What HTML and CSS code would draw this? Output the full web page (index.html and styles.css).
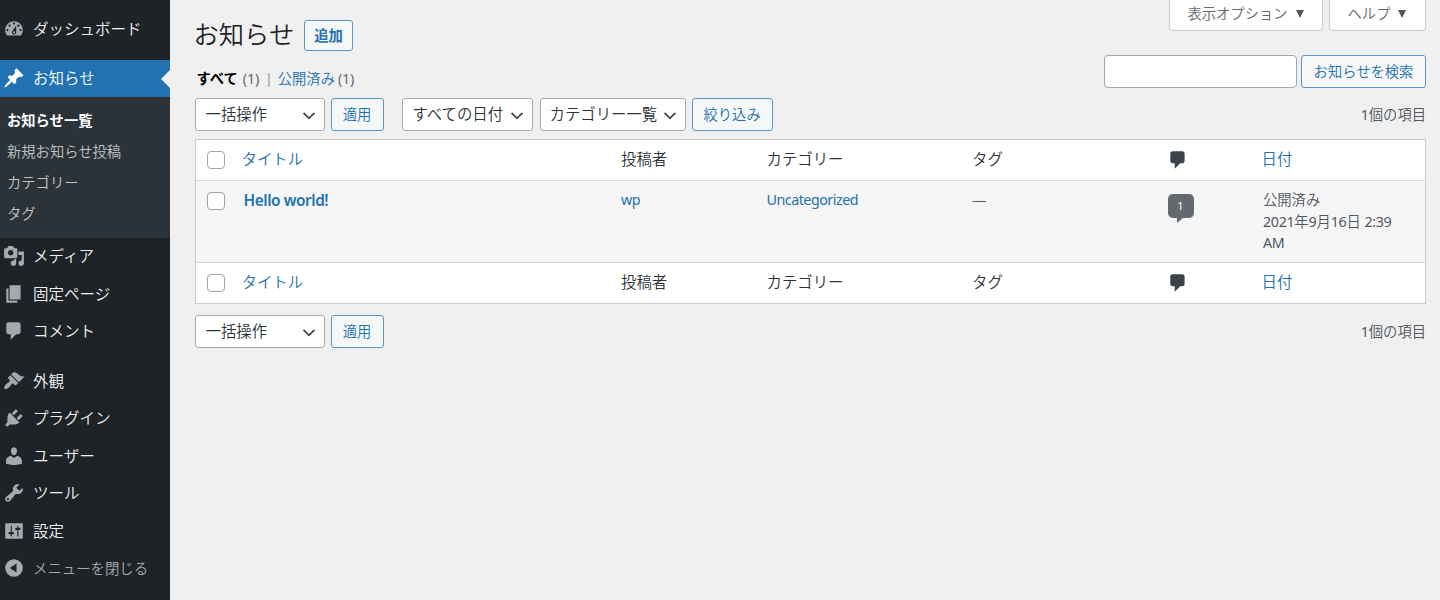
FILE: index.html
```html
<!DOCTYPE html>
<html lang="ja">
<head>
    <meta charset="UTF-8">
    <title>お知らせ</title>
    <link rel="stylesheet" href="styles.css">
</head>
<body>

    <!-- Menu latéral -->
    <nav class="sidebar">
        <ul class="menu">
            <li><a href="#"><svg class="icon" viewBox="0 0 20 20"><path fill-rule="evenodd" d="M3.76 16h12.48c1.1-1.37 1.76-3.11 1.76-5 0-4.42-3.58-8-8-8s-8 3.58-8 8c0 1.89.66 3.63 1.76 5zM10 4c.55 0 1 .45 1 1s-.45 1-1 1-1-.45-1-1 .45-1 1-1zM6 6c.55 0 1 .45 1 1s-.45 1-1 1-1-.45-1-1 .45-1 1-1zm8 0c.55 0 1 .45 1 1s-.45 1-1 1-1-.45-1-1 .45-1 1-1zm-5.37 5.55L12 7v6c0 1.1-.9 2-2 2s-2-.9-2-2c0-.57.24-1.08.63-1.45zM4 10c.55 0 1 .45 1 1s-.45 1-1 1-1-.45-1-1 .45-1 1-1zm12 0c.55 0 1 .45 1 1s-.45 1-1 1-1-.45-1-1 .45-1 1-1zm-5 3c0-.55-.45-1-1-1s-1 .45-1 1 .45 1 1 1 1-.45 1-1z"/></svg><span>ダッシュボード</span></a></li>
            <li class="separator"></li>
            <li class="current">
                <a href="#"><svg class="icon" viewBox="0 0 20 20"><path d="M10.44 3.02l1.82-1.82 6.36 6.35-1.83 1.82c-1.05-.68-2.48-.57-3.41.36l-.75.75c-.92.93-1.04 2.35-.35 3.41l-1.83 1.82-2.41-2.41-2.8 2.79c-.42.42-3.38 2.71-3.8 2.29s1.86-3.39 2.28-3.81l2.79-2.79L4.1 9.36l1.83-1.82c1.05.69 2.48.57 3.4-.36l.75-.75c.93-.92 1.05-2.35.36-3.41z"/></svg><span>お知らせ</span></a>
                <ul class="submenu">
                    <li class="active">お知らせ一覧</li>
                    <li>新規お知らせ投稿</li>
                    <li>カテゴリー</li>
                    <li>タグ</li>
                </ul>
            </li>
            <li><a href="#"><svg class="icon" viewBox="0 0 20 20"><path fill-rule="evenodd" d="M13 11V4c0-.55-.45-1-1-1h-1.67L9 1H5L3.67 3H2c-.55 0-1 .45-1 1v7c0 .55.45 1 1 1h10c.55 0 1-.45 1-1zM7 4.5c1.38 0 2.5 1.12 2.5 2.5S8.38 9.5 7 9.5 4.5 8.38 4.5 7 5.62 4.5 7 4.5zM14 6h5v10.5c0 1.38-1.12 2.5-2.5 2.5S14 17.88 14 16.5s1.12-2.5 2.5-2.5c.17 0 .34.02.5.05V9h-3V6zm-4 8.05V13h2v3.5c0 1.38-1.12 2.5-2.5 2.5S7 17.88 7 16.5 8.12 14 9.5 14c.17 0 .34.02.5.05z"/></svg><span>メディア</span></a></li>
            <li><a href="#"><svg class="icon" viewBox="0 0 20 20"><path d="M6 15V2h10v13H6zm-1 1h8v2H3V5h2v11z"/></svg><span>固定ページ</span></a></li>
            <li><a href="#"><svg class="icon" viewBox="0 0 20 20"><path d="M5 2h9c1.1 0 2 .9 2 2v7c0 1.1-.9 2-2 2h-2l-5 5v-5H5c-1.1 0-2-.9-2-2V4c0-1.1.9-2 2-2z"/></svg><span>コメント</span></a></li>
            <li class="separator"></li>
            <li><a href="#"><svg class="icon" viewBox="0 0 20 20"><path d="M14.48 11.06L7.41 3.99l1.5-1.5c.5-.56 2.3-.47 3.51.32 1.21.8 1.43 1.28 2.91 2.1 1.18.64 2.45 1.26 4.45.85zm-.71.71L6.7 4.7 4.93 6.47c-.39.39-.39 1.02 0 1.41l1.06 1.06c.39.39.39 1.03 0 1.42-.6.6-1.43 1.11-2.21 1.69-.35.26-.7.53-1.01.84C1.43 14.23.4 16.08 1.4 17.07c.99 1 2.84-.03 4.18-1.36.31-.31.58-.66.85-1.02.57-.78 1.08-1.61 1.69-2.21.39-.39 1.02-.39 1.41 0l1.06 1.06c.39.39 1.02.39 1.41 0z"/></svg><span>外観</span></a></li>
            <li><a href="#"><svg class="icon" viewBox="0 0 20 20"><path d="M13.11 4.36L9.87 7.6 8 5.73l3.24-3.24c.35-.34 1.05-.2 1.56.32.52.51.66 1.21.31 1.55zm-8 1.77l.91-1.12 9.01 9.01-1.19.84c-.71.71-2.63 1.16-3.82 1.16H6.14L4.9 17.26c-.59.59-1.54.59-2.12 0-.59-.58-.59-1.53 0-2.12l1.24-1.24v-3.88c0-1.13.4-3.19 1.09-3.89zm7.26 3.97l3.24-3.24c.34-.35 1.04-.21 1.55.31.52.51.66 1.21.31 1.55l-3.24 3.25z"/></svg><span>プラグイン</span></a></li>
            <li><a href="#"><svg class="icon" viewBox="0 0 20 20"><path d="M10 9.25c-2.27 0-2.73-3.44-2.73-3.44C7 4.02 7.82 2 9.97 2c2.16 0 2.98 2.02 2.71 3.81 0 0-.41 3.44-2.68 3.44zm0 2.57L12.72 10c2.39 0 4.52 2.33 4.52 4.53v2.49s-3.65 1.13-7.24 1.13c-3.65 0-7.24-1.13-7.24-1.13v-2.49c0-2.25 1.94-4.48 4.47-4.48z"/></svg><span>ユーザー</span></a></li>
            <li><a href="#"><svg class="icon" viewBox="0 0 20 20"><path fill-rule="evenodd" d="M16.68 9.77c-1.34 1.34-3.3 1.67-4.95.99l-5.41 6.52c-.99.99-2.59.99-3.58 0s-.99-2.59 0-3.57l6.52-5.42c-.68-1.65-.35-3.61.99-4.95 1.28-1.28 3.12-1.62 4.72-1.06l-2.89 2.89 2.82 2.82 2.86-2.87c.53 1.58.18 3.39-1.08 4.65zM3.81 16.21c.4.39 1.04.39 1.43 0 .4-.4.4-1.04 0-1.43-.39-.4-1.03-.4-1.43 0-.39.39-.39 1.03 0 1.43z"/></svg><span>ツール</span></a></li>
            <li><a href="#"><svg class="icon" viewBox="0 0 20 20"><path fill-rule="evenodd" d="M18 16V4c0-.55-.45-1-1-1H3c-.55 0-1 .45-1 1v12c0 .55.45 1 1 1h14c.55 0 1-.45 1-1zM8 11h1c.55 0 1 .45 1 1s-.45 1-1 1H8v1.5c0 .28-.22.5-.5.5s-.5-.22-.5-.5V13H6c-.55 0-1-.45-1-1s.45-1 1-1h1V5.5c0-.28.22-.5.5-.5s.5.22.5.5V11zm5-2h-1c-.55 0-1-.45-1-1s.45-1 1-1h1V5.5c0-.28.22-.5.5-.5s.5.22.5.5V7h1c.55 0 1 .45 1 1s-.45 1-1 1h-1v5.5c0 .28-.22.5-.5.5s-.5-.22-.5-.5V9z"/></svg><span>設定</span></a></li>
            <li class="collapse"><a href="#"><svg class="icon" viewBox="0 0 20 20"><path fill-rule="evenodd" d="M10 2a8 8 0 1 0 0 16 8 8 0 0 0 0-16zM12.3 6v8L6.3 10z"/></svg><span>メニューを閉じる</span></a></li>
        </ul>
    </nav>

    <main class="content">
        <header class="page-head">
            <div class="head-left">
                <div class="title-row">
                    <h1>お知らせ</h1>
                    <a class="btn btn-add" href="#">追加</a>
                </div>
                <div class="filters">
                    <b>すべて</b> <span>(1)</span> <i>|</i> <a href="#">公開済み</a> <span>(1)</span>
                </div>
            </div>
            <div class="head-right">
                <div class="screen-links">
                    <button class="screen-tab">表示オプション<span class="caret"></span></button>
                    <button class="screen-tab tab-help">ヘルプ<span class="caret"></span></button>
                </div>
                <div class="search-box">
                    <input type="text">
                    <button class="btn">お知らせを検索</button>
                </div>
            </div>
        </header>

        <div class="tablenav">
            <select class="select-bulk"><option>一括操作</option></select>
            <button class="btn">適用</button>
            <select class="select-date"><option>すべての日付</option></select>
            <select class="select-cat"><option>カテゴリー一覧</option></select>
            <button class="btn btn-filter">絞り込み</button>
            <span class="count"><span class="num">1</span>個の項目</span>
        </div>

        <!-- Liste des articles -->
        <table class="posts">
            <colgroup>
                <col class="col-cb"><col class="col-title"><col class="col-author"><col class="col-cat"><col class="col-tag"><col class="col-comment"><col>
            </colgroup>
            <thead>
                <tr>
                    <th class="cb"><input type="checkbox"></th>
                    <th><a href="#">タイトル</a></th>
                    <th>投稿者</th>
                    <th>カテゴリー</th>
                    <th>タグ</th>
                    <th class="comment"><svg class="icon" viewBox="0 0 20 20"><path d="M5 2h9c1.1 0 2 .9 2 2v7c0 1.1-.9 2-2 2h-2l-5 5v-5H5c-1.1 0-2-.9-2-2V4c0-1.1.9-2 2-2z"/></svg></th>
                    <th><a href="#">日付</a></th>
                </tr>
            </thead>
            <tbody>
                <tr>
                    <td class="cb"><input type="checkbox"></td>
                    <td class="post-title"><a href="#">Hello world!</a></td>
                    <td><a href="#">wp</a></td>
                    <td><a href="#">Uncategorized</a></td>
                    <td>—</td>
                    <td class="bubble-cell"><span class="bubble">1</span></td>
                    <td class="date">公開済み<br><span class="num">2021</span>年<span class="num">9</span>月<span class="num">16</span>日 <span class="num">2:39</span><br><span class="num">AM</span></td>
                </tr>
            </tbody>
            <tfoot>
                <tr>
                    <th class="cb"><input type="checkbox"></th>
                    <th><a href="#">タイトル</a></th>
                    <th>投稿者</th>
                    <th>カテゴリー</th>
                    <th>タグ</th>
                    <th class="comment"><svg class="icon" viewBox="0 0 20 20"><path d="M5 2h9c1.1 0 2 .9 2 2v7c0 1.1-.9 2-2 2h-2l-5 5v-5H5c-1.1 0-2-.9-2-2V4c0-1.1.9-2 2-2z"/></svg></th>
                    <th><a href="#">日付</a></th>
                </tr>
            </tfoot>
        </table>

        <div class="tablenav tablenav-bottom">
            <select class="select-bulk"><option>一括操作</option></select>
            <button class="btn">適用</button>
            <span class="count"><span class="num">1</span>個の項目</span>
        </div>
    </main>

</body>
</html>
```
FILE: styles.css
```css
* { box-sizing: border-box; }
body {
    margin: 0;
    display: flex;
    height: 600px;
    overflow: hidden;
    background: #f0f0f1;
    color: #3c434a;
    font-family: "Noto Sans", "Noto Sans CJK JP", sans-serif;
    font-size: 14.3px;
    font-weight: 350;
}
a { color: #2271b1; text-decoration: none; }
ul { list-style: none; margin: 0; padding: 0; }
button, select, input { font: inherit; margin: 0; }
.icon { width: 22px; height: 22px; fill: currentColor; flex: none; }
.num { font-weight: 400; }

/* menu */
.sidebar { width: 169.5px; flex: none; background: #1d2327; padding-top: 10px; }
.menu a { display: flex; align-items: center; height: 37.5px; padding-left: 3px; color: #f0f0f1; font-size: 15.5px; }
.menu a span { padding-bottom: 1px; }
.menu .icon { color: #a7aaad; margin-right: 8px; }
.separator { height: 12px; }
.current { position: relative; }
.current > a { background: #2271b1; color: #fff; }
.current > a .icon { color: #fff; }
.current > a::after {
    content: "";
    position: absolute;
    right: 0;
    top: 10px;
    border: 9px solid transparent;
    border-left: 0;
    border-right-color: #f0f0f1;
}
.submenu { background: #2c3338; padding: 9px 0 8px; }
.submenu li { height: 30.9px; line-height: 30.9px; padding-left: 7px; color: #c3c4c7; }
.submenu .active { color: #fff; font-weight: 600; }
.menu .collapse a { color: #a7aaad; font-size: 14.4px; }

/* en-tête */
.content { flex: 1; padding: 0 14px 0 25px; }
.page-head { display: flex; justify-content: space-between; height: 98px; }
.title-row { display: flex; align-items: center; gap: 9px; padding-top: 20px; height: 51px; }
h1 { margin: 0 1px 3px -1px; font-size: 25.3px; font-weight: 350; color: #1d2327; line-height: 30px; }
.btn {
    height: 33px;
    padding: 0 11px 2px;
    border: 1px solid #5a96c8;
    border-radius: 3px;
    background: #f6f7f7;
    color: #2271b1;
    white-space: nowrap;
}
.btn-add { height: 31px; line-height: 29px; padding: 0 9px; font-weight: 600; }
.filters { display: flex; padding: 16px 0 0 2px; line-height: 24px; color: #646970; }
.filters b { color: #000; font-weight: 600; margin-right: 5px; }
.filters i { font-style: normal; margin: 0 5px 0 6px; }
.filters a { margin-right: 3px; }
.filters span { font-weight: 400; letter-spacing: -0.2px; }
.screen-links { display: flex; justify-content: flex-end; gap: 6px; }
.screen-tab {
    width: 154px;
    height: 31px;
    padding: 0 1px 6px 0;
    border: 1px solid #c9cbce;
    border-top: 0;
    border-radius: 0 0 4px 4px;
    background: #fff;
    color: #646970;
}
.tab-help { width: 97px; }
.caret { display: inline-block; margin-left: 8px; border: 4.5px solid transparent; border-top: 8px solid #50575e; border-bottom: 0; vertical-align: 1px; }
.search-box { display: flex; justify-content: flex-end; gap: 4px; padding-top: 24px; }
.search-box input { width: 193px; height: 33px; border: 1px solid #a5a8ad; border-radius: 4px; background: #fff; }
.search-box .btn { width: 125px; }

/* barre d'actions */
.tablenav { display: flex; align-items: center; height: 33px; margin-bottom: 8px; }
.tablenav-bottom { margin-top: 11px; }
select {
    appearance: none;
    height: 33px;
    padding: 0 0 0 10px;
    border: 1px solid #a5a8ad;
    border-radius: 3px;
    color: #2c3338;
    font-size: 15.4px;
    background: #fff url('data:image/svg+xml;utf8,<svg xmlns="http://www.w3.org/2000/svg" viewBox="0 0 20 20"><path d="M5 6l5 5 5-5 2 1-7 7-7-7 2-1z" fill="%23444"/></svg>') no-repeat right 6px top 8px;
    background-size: 18px 18px;
}
.select-bulk { width: 130px; margin-right: 6px; }
.tablenav .select-bulk + .btn { width: 53px; padding: 0 0 2px; }
.select-date { width: 131px; margin: 0 7px 0 18px; }
.select-cat { width: 146px; margin-right: 6px; padding-left: 9px; }
.count { margin-left: auto; padding-bottom: 3px; color: #50575e; }

/* tableau */
.posts {
    width: 100%;
    table-layout: fixed;
    border-collapse: separate;
    border-spacing: 0;
    border: 1px solid #c9cbce;
    background: #fff;
}
.col-cb { width: 35px; }
.col-title { width: 379.5px; }
.col-author { width: 145.5px; }
.col-cat { width: 205.5px; }
.col-tag { width: 194.5px; }
.col-comment { width: 95px; }
th { height: 40px; padding: 0 11px; text-align: left; font-weight: 350; font-size: 15.4px; color: #2c3338; line-height: 24px; }
td { height: 83px; padding: 8px 11px 6px; vertical-align: top; line-height: 21.6px; color: #50575e; background: #f6f6f7; border-top: 1px solid #d8d8da; border-bottom: 1px solid #d8d8da; }
td a { font-weight: 400; letter-spacing: -0.5px; }
.posts .cb { padding: 0 0 0 11px; }
.posts td.cb { padding-top: 11px; }
input[type="checkbox"] { appearance: none; display: block; width: 18px; height: 18px; border: 1px solid #a0a4a9; border-radius: 4px; background: #fff; }
.posts .post-title { padding-left: 13px; padding-top: 9px; font-size: 15.4px; }
.post-title a { font-weight: 600; letter-spacing: -0.45px; }
.posts .date { padding-left: 12.5px; padding-right: 0; }
.date .num { letter-spacing: -0.35px; }
.comment .icon { display: block; color: #3c434a; }
.bubble-cell { padding-top: 13px; }
.bubble {
    position: relative;
    display: block;
    width: 26px;
    height: 24px;
    margin-left: 1px;
    border-radius: 5px;
    background: #646970;
    color: #fff;
    font-size: 11px;
    font-weight: 400;
    line-height: 24px;
    text-align: center;
}
.bubble::after {
    content: "";
    position: absolute;
    left: 9px;
    top: 24px;
    border-top: 5px solid #646970;
    border-right: 6px solid transparent;
}
```
